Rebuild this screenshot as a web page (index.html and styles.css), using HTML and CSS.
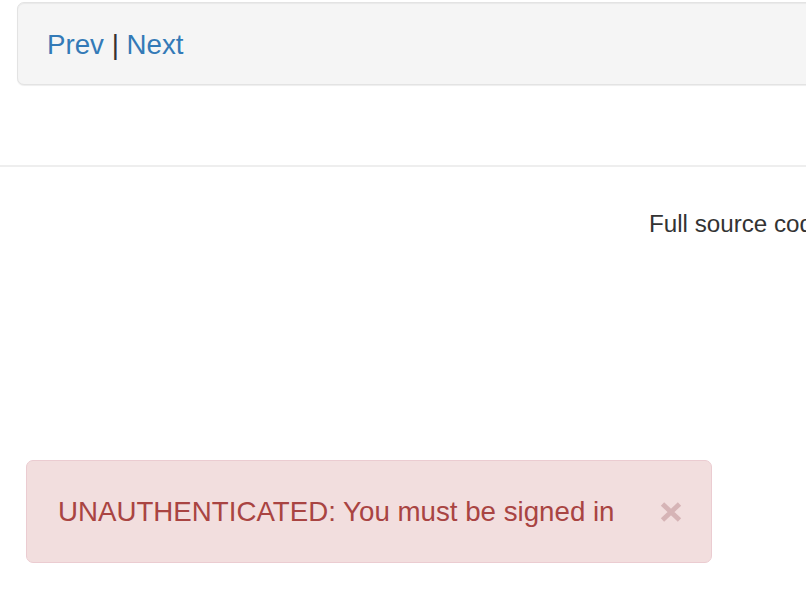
FILE: index.html
```html
<!DOCTYPE html>
<html>
<head>
<meta charset="utf-8">
<link rel="stylesheet" href="styles.css">
</head>
<body>
  <div class="page">
    <div class="well">
      <a href="#" class="link">Prev</a> <span class="sep">|</span> <a href="#" class="link">Next</a>
    </div>
  </div>
  <hr class="rule">
  <footer class="footer">Full source code available on GitHub</footer>

  <div class="alert" role="alert">
    <span class="alert-text">UNAUTHENTICATED: You must be signed in</span>
    <svg class="close" width="22" height="20" viewBox="0 0 22 20" aria-label="close">
      <path d="M2.5 2 L19.5 18 M19.5 2 L2.5 18" stroke="currentColor" stroke-width="4.8" fill="none"/>
    </svg>
  </div>
</body>
</html>
```
FILE: styles.css
```css
html, body {
  margin: 0;
  padding: 0;
  overflow: hidden;
  background: #fff;
}
body {
  font-family: "Liberation Sans", Arial, Helvetica, sans-serif;
  color: #333;
  width: 806px;
  height: 592px;
}
.page {
  padding: 2px 0 0 17px;
  height: 165px;
  box-sizing: border-box;
}
.well {
  width: 1000px;
  box-sizing: border-box;
  background: #f5f5f5;
  border: 1px solid #e3e3e3;
  border-radius: 7px;
  box-shadow: inset 0 1px 1px rgba(0,0,0,.05), 0 1px 1px rgba(0,0,0,.07);
  padding: 23px 28px 20px 29px;
  font-size: 27.7px;
  line-height: 38px;
  white-space: nowrap;
}
.link {
  color: #337ab7;
  text-decoration: none;
}
.sep {
  color: #333;
}
.rule {
  margin: 0;
  border: 0;
  height: 2px;
  background: #eee;
}
.footer {
  margin-top: 40px;
  padding-left: 649px;
  font-size: 24.2px;
  line-height: 34px;
  white-space: nowrap;
  color: #333;
}
.alert {
  position: fixed;
  left: 26px;
  top: 460px;
  width: 686px;
  height: 103px;
  box-sizing: border-box;
  display: flex;
  align-items: center;
  justify-content: space-between;
  padding: 0 29px 0 31px;
  background: #f2dede;
  border: 1px solid #ebccd1;
  border-radius: 7px;
  color: #a94442;
  font-size: 27.7px;
  line-height: 38px;
}
.close {
  color: #d6b4b6;
  flex: none;
}
```
